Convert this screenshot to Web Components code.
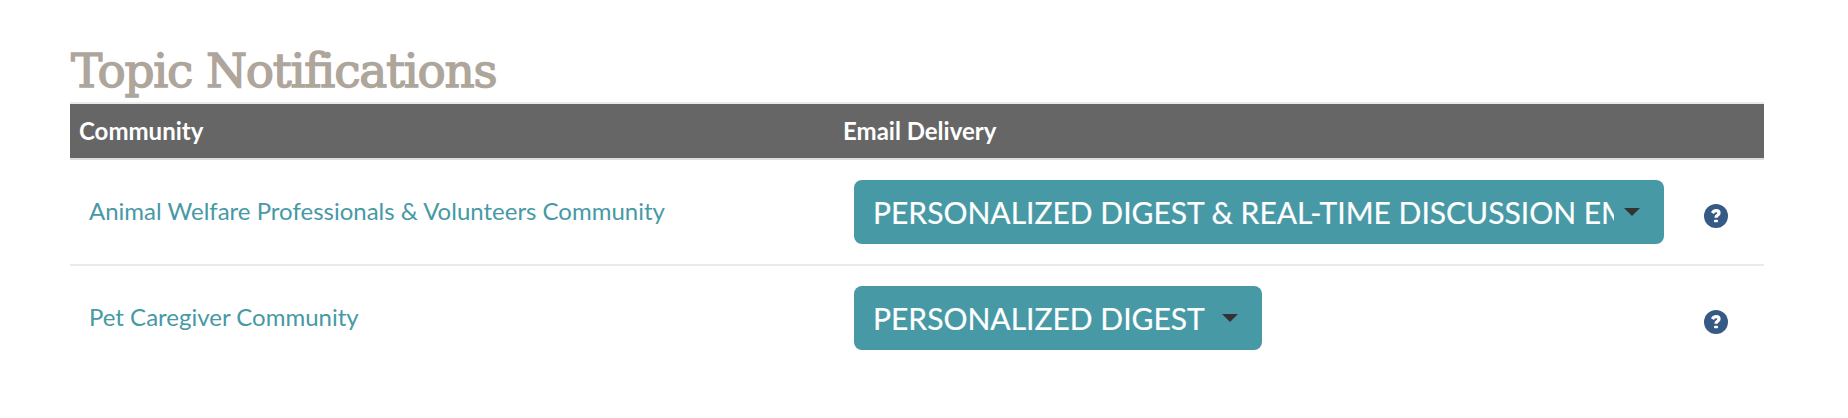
<!DOCTYPE html>
<html lang="en">
<head>
<meta charset="utf-8">
<title>Topic Notifications</title>
<style>
    :root {
        --brand-teal: #4799a6;
        --brand-taupe: #aea59b;
        --header-bg: #666;
        --line: #ebebeb;
        --help-blue: #345a85;
    }

    body {
        margin: 0;
        background: #fff;
        font-family: Lato, "Liberation Sans", sans-serif;
        font-size: 24px;
    }
</style>
</head>
<body>
<notification-table heading="Topic Notifications">
    <notification-row>
        <a slot="name">Animal Welfare Professionals &amp; Volunteers Community</a>
        <delivery-select style="width: 810px">Personalized Digest &amp; Real-Time Discussion Emails</delivery-select>
    </notification-row>
    <notification-row>
        <a slot="name">Pet Caregiver Community</a>
        <delivery-select style="width: 408px">Personalized Digest</delivery-select>
    </notification-row>
</notification-table>

<script>
const tableTemplate = document.createElement('template');
tableTemplate.innerHTML = `
    <style>
        :host {
            display: block;
            padding: 42px 84px 0 70px;
        }

        h2 {
            height: 60px;
            margin: 0;
            padding-left: 1px;
            line-height: 58px;
            white-space: nowrap;

            font-family: "DejaVu Serif", serif;
            font-size: 47px;
            font-weight: 400;
            letter-spacing: -1.25px;
            color: var(--brand-taupe);
            -webkit-text-stroke: 1.4px var(--brand-taupe);
        }

        .head {
            display: grid;
            grid-template-columns: 764px 1fr;
            height: 54px;
            line-height: 54px;

            background: var(--header-bg);
            border-top: 2px solid var(--line);
            border-bottom: 2px solid #ddd;

            color: #fff;
            font-weight: 700;
        }

        .head span {
            padding-left: 9px;
        }
    </style>
    <h2></h2>
    <div class="head"><span>Community</span><span>Email Delivery</span></div>
    <slot></slot>
`;

class NotificationTable extends HTMLElement {
    connectedCallback() {
        const shadowRoot = this.attachShadow({mode: 'open'});
        shadowRoot.appendChild(tableTemplate.content.cloneNode(true));
        shadowRoot.querySelector('h2').textContent = this.getAttribute('heading');
    }
}

const rowTemplate = document.createElement('template');
rowTemplate.innerHTML = `
    <style>
        :host {
            display: grid;
            grid-template-columns: 764px 1fr 60px;
            align-items: center;
            height: 104px;
            border-bottom: 2px solid var(--line);
        }

        :host(:last-of-type) {
            border-bottom: none;
        }

        .name {
            padding-left: 19px;
            padding-bottom: 4px;
            color: var(--brand-teal);
        }

        .delivery {
            padding-left: 20px;
        }

        help-icon {
            margin-top: 8px;
        }
    </style>
    <div class="name"><slot name="name"></slot></div>
    <div class="delivery"><slot></slot></div>
    <help-icon></help-icon>
`;

class NotificationRow extends HTMLElement {
    connectedCallback() {
        const shadowRoot = this.attachShadow({mode: 'open'});
        shadowRoot.appendChild(rowTemplate.content.cloneNode(true));
    }
}

const selectTemplate = document.createElement('template');
selectTemplate.innerHTML = `
    <style>
        :host {
            display: flex;
            align-items: center;
            box-sizing: border-box;
            height: 64px;
            padding: 0 24px 0 19px;
            border-radius: 8px;

            background: var(--brand-teal);
            color: #fff;
            font-size: 30px;
        }

        .label {
            flex: 1;
            min-width: 0;
            overflow: hidden;
            white-space: nowrap;
            text-transform: uppercase;
            line-height: 60px;
            margin-right: 10px;
            -webkit-text-stroke: 0.2px #fff;
        }

        svg {
            display: block;
            width: 16px;
            height: 8px;
        }
    </style>
    <div class="label"><slot></slot></div>
    <svg viewBox="0 0 16 8"><path d="M0 0h16L8 8z" fill="#333"/></svg>
`;

class DeliverySelect extends HTMLElement {
    connectedCallback() {
        const shadowRoot = this.attachShadow({mode: 'open'});
        shadowRoot.appendChild(selectTemplate.content.cloneNode(true));
    }
}

const helpTemplate = document.createElement('template');
helpTemplate.innerHTML = `
    <style>
        :host {
            display: block;
            width: 24px;
            height: 24px;
        }

        svg {
            display: block;
        }
    </style>
    <svg width="24" height="24" viewBox="0 0 24 24">
        <circle cx="12" cy="12" r="12" fill="var(--help-blue)"/>
        <path d="M8.4 9.1Q9.8 6.7 12.1 6.7Q15 6.7 15 9Q15 10.5 13.4 11.4Q12 12.2 12 13.8" fill="none" stroke="#fff" stroke-width="3.3"/>
        <rect x="10" y="15.7" width="4" height="2.5" rx=".8" fill="#fff"/>
    </svg>
`;

class HelpIcon extends HTMLElement {
    connectedCallback() {
        const shadowRoot = this.attachShadow({mode: 'open'});
        shadowRoot.appendChild(helpTemplate.content.cloneNode(true));
    }
}

customElements.define('help-icon', HelpIcon);
customElements.define('delivery-select', DeliverySelect);
customElements.define('notification-row', NotificationRow);
customElements.define('notification-table', NotificationTable);
</script>
</body>
</html>
